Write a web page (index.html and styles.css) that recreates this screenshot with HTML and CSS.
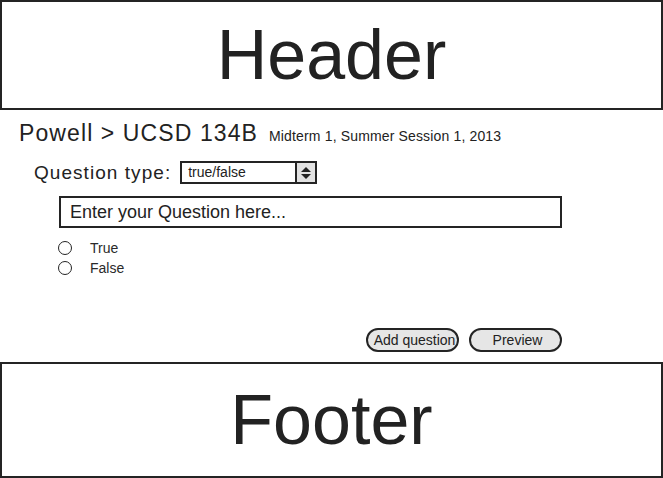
FILE: index.html
```html
<!DOCTYPE html>
<html>
<head>
<meta charset="utf-8">
<link rel="stylesheet" href="styles.css">
</head>
<body>
<div class="page">
  <header class="box header">Header</header>
  <main class="main">
    <div class="title-row">
      <span class="title">Powell &gt; UCSD 134B</span>
      <span class="subtitle">Midterm 1, Summer Session 1, 2013</span>
    </div>
    <div class="type-row">
      <span class="type-label">Question type:</span>
      <div class="select">
        <span class="select-value">true/false</span>
        <span class="select-arrows">
          <svg width="12" height="14" viewBox="0 0 12 14">
            <polygon points="1,6 11,6 6,1" fill="#222"/>
            <polygon points="1,8 11,8 6,13" fill="#222"/>
          </svg>
        </span>
      </div>
    </div>
    <div class="question-input">Enter your Question here...</div>
    <div class="options">
      <div class="option"><span class="radio"></span><span class="option-label">True</span></div>
      <div class="option"><span class="radio"></span><span class="option-label">False</span></div>
    </div>
    <div class="actions">
      <div class="btn">Add question</div>
      <div class="btn">Preview</div>
    </div>
  </main>
  <footer class="box footer">Footer</footer>
</div>
</body>
</html>
```

FILE: styles.css
```css
html, body {
  margin: 0;
  padding: 0;
  background: #fff;
}
body {
  font-family: "Liberation Sans", Arial, sans-serif;
  color: #222;
}
.page {
  width: 663px;
  height: 478px;
  display: flex;
  flex-direction: column;
}
.box {
  box-sizing: border-box;
  border: 2px solid #242424;
  display: flex;
  align-items: center;
  justify-content: center;
  font-size: 70px;
  color: #222;
}
.header {
  height: 110px;
}
.footer {
  height: 116px;
}
.main {
  box-sizing: border-box;
  height: 252px;
  padding-top: 9px;
  display: flex;
  flex-direction: column;
}
.title-row {
  display: flex;
  align-items: baseline;
  margin-left: 19px;
  height: 28px;
  line-height: 28px;
}
.title {
  font-size: 23px;
  letter-spacing: 1.1px;
}
.subtitle {
  font-size: 14px;
  margin-left: 11px;
  letter-spacing: 0.15px;
}
.type-row {
  display: flex;
  align-items: flex-start;
  margin-top: 14px;
  margin-left: 34px;
}
.type-label {
  font-size: 19px;
  line-height: 23px;
  letter-spacing: 1.05px;
  margin-right: 9px;
}
.select {
  box-sizing: border-box;
  width: 137px;
  height: 23px;
  border: 2px solid #242424;
  display: flex;
}
.select-value {
  flex: 1;
  font-size: 14px;
  line-height: 19px;
  padding-left: 6px;
  border-right: 2px solid #242424;
}
.select-arrows {
  width: 18px;
  background: #e2e2e2;
  display: flex;
  align-items: center;
  justify-content: center;
}
.select-arrows svg {
  display: block;
}
.question-input {
  box-sizing: border-box;
  margin-top: 12px;
  margin-left: 59px;
  width: 503px;
  height: 32px;
  border: 2px solid #242424;
  font-size: 18px;
  line-height: 28px;
  padding-left: 9px;
}
.options {
  margin-top: 10px;
  margin-left: 58px;
  display: flex;
  flex-direction: column;
}
.option {
  display: flex;
  align-items: center;
  height: 20px;
}
.radio {
  box-sizing: border-box;
  width: 14px;
  height: 14px;
  border: 1.6px solid #242424;
  border-radius: 50%;
  margin-right: 18px;
}
.option-label {
  font-size: 14px;
  line-height: 20px;
  color: #2a2a2a;
}
.actions {
  margin-top: auto;
  margin-bottom: 10px;
  width: 562px;
  display: flex;
  justify-content: flex-end;
  gap: 10px;
}
.btn {
  box-sizing: border-box;
  width: 93px;
  height: 24px;
  border: 2px solid #242424;
  border-radius: 12px;
  background: #e6e6e6;
  font-size: 14px;
  line-height: 20px;
  text-align: center;
  white-space: nowrap;
  overflow: hidden;
  padding: 0 0 0 4px;
}
```
